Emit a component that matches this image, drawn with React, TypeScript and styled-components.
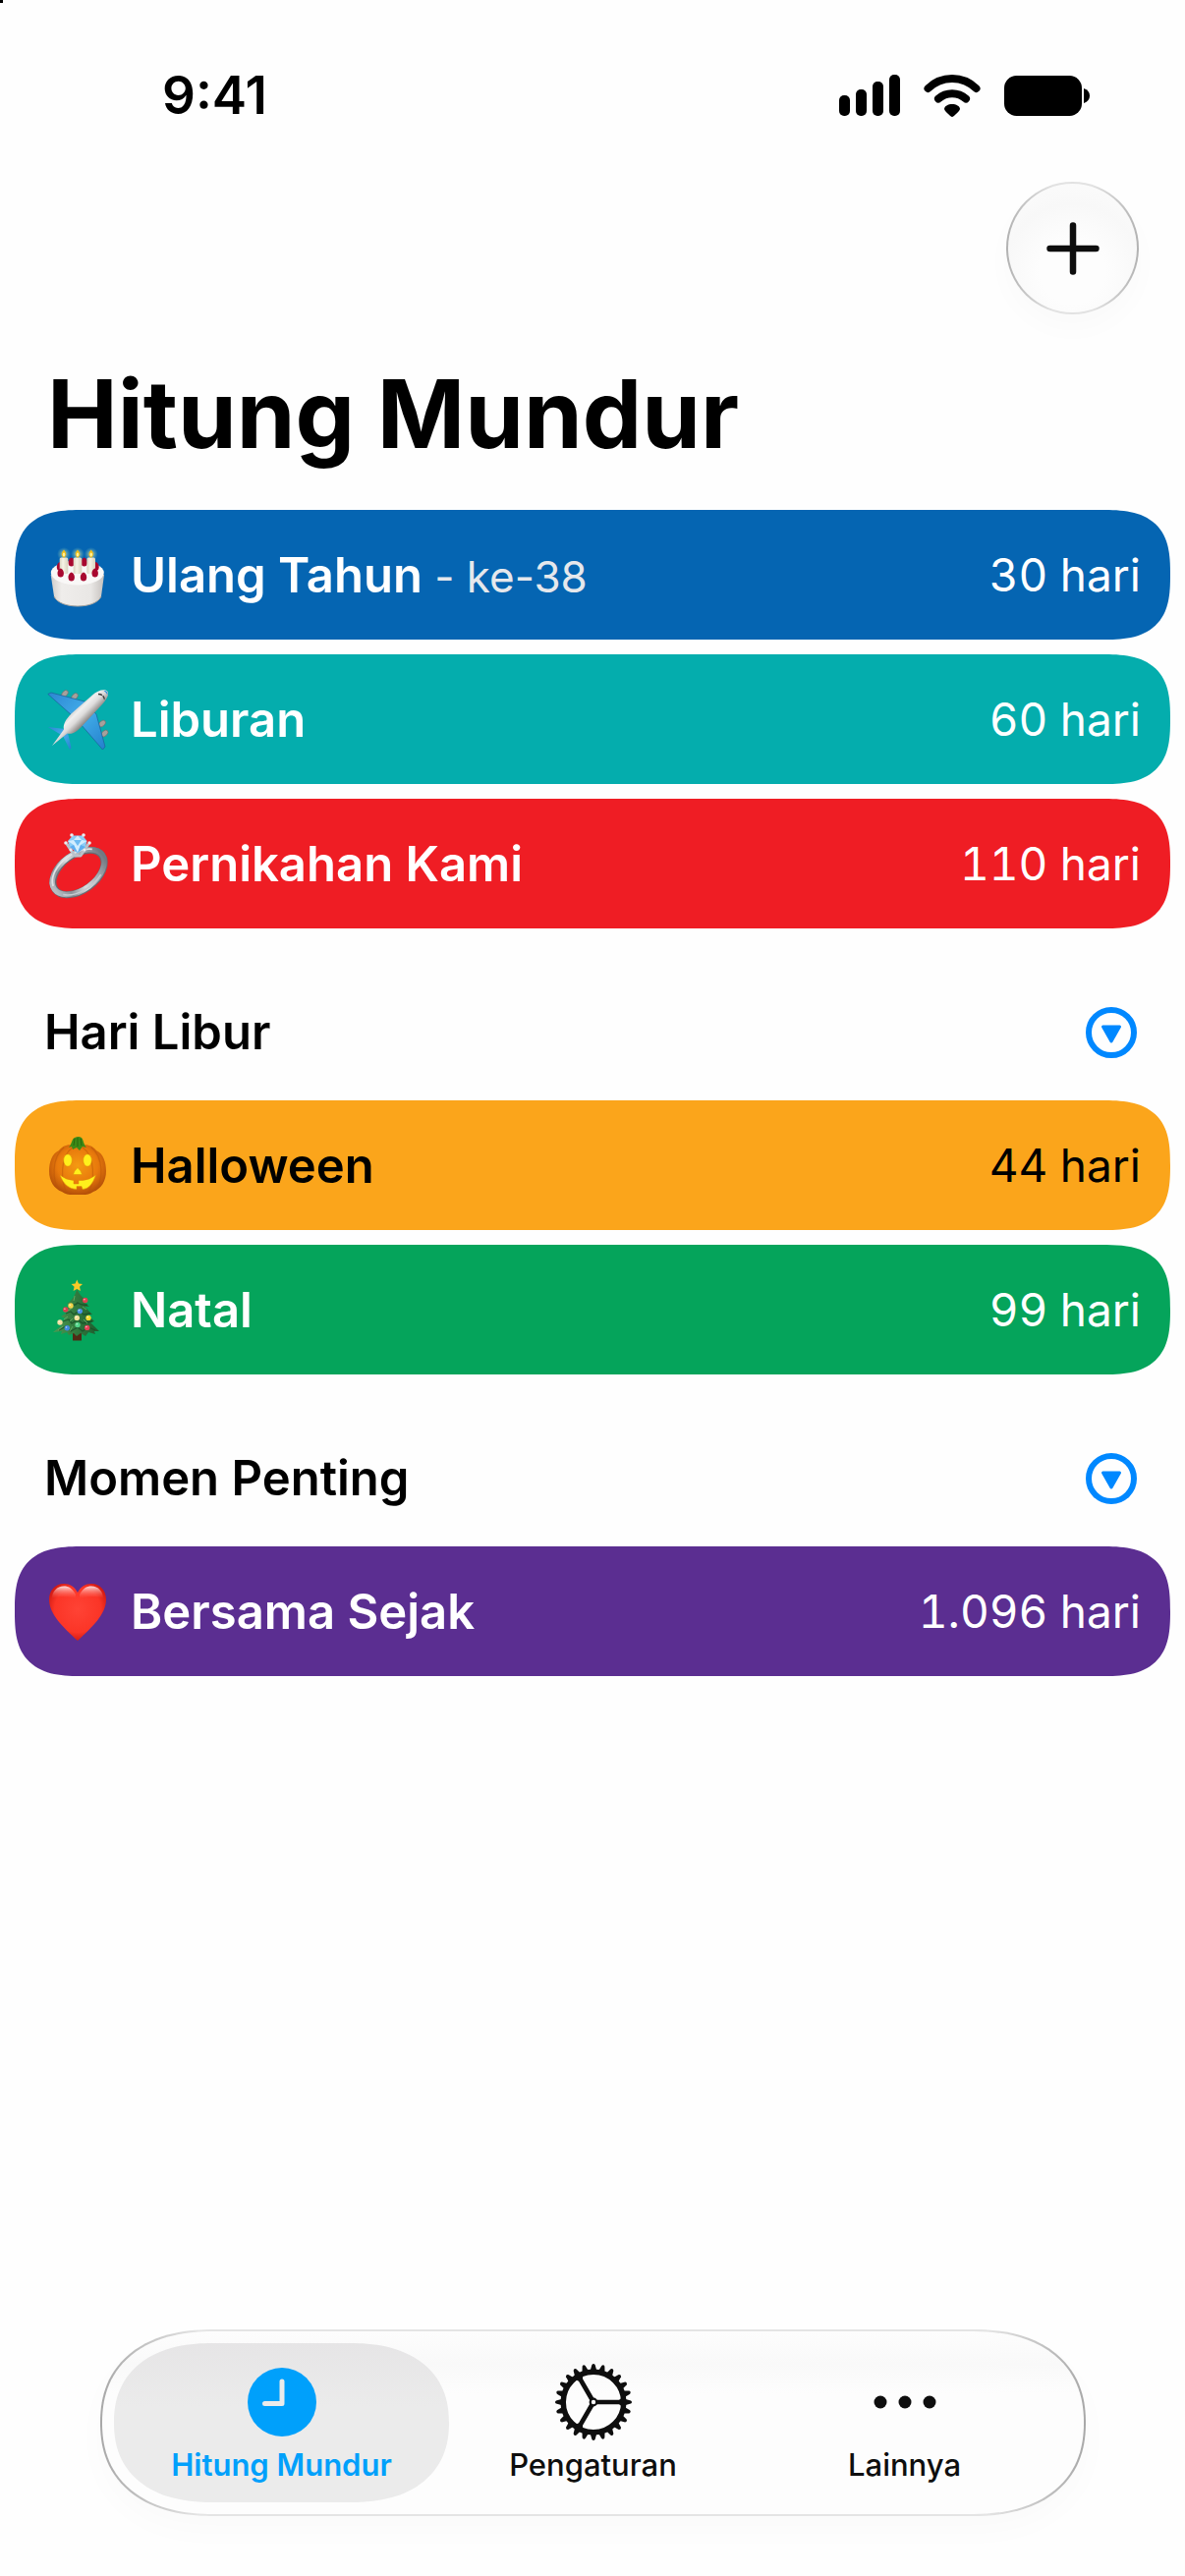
import React, { useState } from 'react';
import styled, { createGlobalStyle } from 'styled-components';

const GlobalStyle = createGlobalStyle`
  * { box-sizing: border-box; }
  body {
    margin: 0;
    background: #fefefe;
    color: #000;
    font-family: Inter, "Liberation Sans", sans-serif;
    -webkit-font-smoothing: antialiased;
  }
  h1, h2, ul { margin: 0; padding: 0; }
  ul { list-style: none; }
  button { font-family: inherit; border: 0; padding: 0; background: none; cursor: pointer; }
  svg { display: block; flex: none; overflow: visible; }
`;

const Screen = styled.div`
  display: flex;
  flex-direction: column;
  min-height: 100vh;
  background: linear-gradient(#000, #000) 0 0 / 3px 3px no-repeat #fefefe;
`;

const StatusBar = styled.header`
  display: flex;
  align-items: center;
  justify-content: space-between;
  padding: 62px 97px 0 165px;
`;

const Clock = styled.time`
  font-size: 53px;
  line-height: 70px;
  font-weight: 600;
`;

const StatusIcons = styled.div`
  display: flex;
  align-items: center;
  gap: 24px;
`;

const Toolbar = styled.div`
  display: flex;
  justify-content: flex-end;
  padding: 53px 47px 0;
`;

const AddButton = styled.button`
  display: grid;
  place-items: center;
  width: 135px;
  height: 135px;
  border-radius: 50%;
  border: 2px solid transparent;
  background:
    radial-gradient(circle at 50% 68%, #fdfdfd 30%, #f8f8f8 62%, #fdfdfd 100%) padding-box,
    linear-gradient(90deg, #b2b2b2, #e2e2e2 35%, #e2e2e2 65%, #b2b2b2) border-box;
  box-shadow: 0 14px 30px rgba(0, 0, 0, 0.02);
`;

const Title = styled.h1`
  padding: 41px 48px 38px;
  font-size: 96px;
  line-height: 120px;
  font-weight: 700;
`;

const SectionHeader = styled.div`
  display: flex;
  align-items: center;
  justify-content: space-between;
  padding: 76px 49px 39px 45px;
`;

const SectionTitle = styled.h2`
  font-size: 49px;
  line-height: 60px;
  font-weight: 600;
`;

const CollapseButton = styled.button`
  color: #0088ff;
`;

const List = styled.ul`
  display: flex;
  flex-direction: column;
  gap: 15px;
  padding: 0 15px;
`;

const Row = styled.li<{ $color: string; $dark?: boolean }>`
  display: flex;
  align-items: center;
  gap: 22px;
  height: 132px;
  padding: 0 30px 0 32px;
  border-radius: 54px;
  background: ${(p) => p.$color};
  color: ${(p) => (p.$dark ? '#000' : '#fff')};
  @supports (corner-shape: squircle) {
    border-radius: 70px / 66px;
    corner-shape: superellipse(1.5);
  }
`;

const Name = styled.span`
  flex: 1;
  padding-top: 2px;
  font-size: 49px;
  line-height: 60px;
  font-weight: 600;
`;

const Note = styled.span`
  font-size: 44px;
  font-weight: 400;
  color: #e6e8ec;
`;

const Count = styled.span`
  font-size: 46px;
  line-height: 60px;
  font-weight: 400;
  font-variant-numeric: tabular-nums;
`;

const TabBar = styled.nav`
  display: flex;
  margin: auto 101px 61px 102px;
  padding: 12px;
  border-radius: 95px;
  border: 2px solid transparent;
  background:
    linear-gradient(#fdfdfd, #f9f9f9 18%, #fdfdfd 34%, #fdfdfd) padding-box,
    linear-gradient(90deg, #a8a8a8, #e4e4e4 10%, #e4e4e4 90%, #a8a8a8) border-box;
  box-shadow: 0 14px 34px rgba(0, 0, 0, 0.02);
  @supports (corner-shape: squircle) {
    border-radius: 116px / 95px;
    corner-shape: superellipse(1.2);
  }
`;

const Tab = styled.button<{ $active: boolean }>`
  flex: 1;
  display: flex;
  flex-direction: column;
  align-items: center;
  gap: 4px;
  height: 162px;
  padding-top: 20px;
  border-radius: 81px;
  font-size: 31px;
  line-height: 40px;
  font-weight: ${(p) => (p.$active ? 600 : 500)};
  color: ${(p) => (p.$active ? '#00a0fb' : '#0e0e0e')};
  background: ${(p) => (p.$active ? 'linear-gradient(#e6e5e6, #ebebeb 40%)' : 'none')};
  & + & { margin-left: -24px; }
  @supports (corner-shape: squircle) {
    border-radius: 100px / 81px;
    corner-shape: superellipse(1.2);
  }
`;

const SignalIcon = () => (
  <svg width="62" height="42" viewBox="0 0 62 42" aria-hidden="true">
    <rect x="0" y="21" width="11" height="21" rx="5" />
    <rect x="17" y="15" width="11" height="27" rx="5" />
    <rect x="34" y="7" width="11" height="35" rx="5" />
    <rect x="51" y="0" width="11" height="42" rx="5" />
  </svg>
);

const WifiIcon = () => (
  <svg width="58" height="43" viewBox="0 0 58 43" aria-hidden="true">
    <g fill="none" stroke="#000" strokeWidth="8" strokeLinecap="round">
      <path d="M4.500 14 A35 35 0 0 1 53.500 14" />
      <path d="M15 24.500 A21 21 0 0 1 43 24.500" />
    </g>
    <path d="M29 43 C27.500 43 21 36.500 21 35 C21 32 25 30 29 30 C33 30 37 32 37 35 C37 36.500 30.500 43 29 43Z" />
  </svg>
);

const BatteryIcon = () => (
  <svg width="87" height="41" viewBox="0 0 87 41" aria-hidden="true">
    <rect width="79" height="41" rx="12.500" />
    <path d="M81 13 C85 14.500 87 17 87 20.500 C87 24 85 26.500 81 28Z" />
  </svg>
);

const PlusIcon = () => (
  <svg width="54" height="54" viewBox="0 0 54 54" aria-hidden="true">
    <path d="M27 3.500 V50.500 M3.500 27 H50.500" stroke="#0e0e0e" strokeWidth="6.500" strokeLinecap="round" />
  </svg>
);

const CollapseIcon = () => (
  <svg width="52" height="52" viewBox="0 0 52 52" aria-hidden="true">
    <circle cx="26" cy="26" r="23" fill="none" stroke="currentColor" strokeWidth="6" />
    <path d="M17.500 20 H34.500 L26 35Z" fill="currentColor" stroke="currentColor" strokeWidth="3" strokeLinejoin="round" />
  </svg>
);

const ClockIcon = () => (
  <svg width="80" height="80" viewBox="0 0 80 80" aria-hidden="true">
    <circle cx="40" cy="40" r="35" fill="currentColor" />
    <path d="M40 19 V41.500 H22.500" fill="none" stroke="#ebebeb" strokeWidth="5" strokeLinecap="round" strokeLinejoin="round" />
  </svg>
);

const GearIcon = () => (
  <svg width="80" height="80" viewBox="0 0 80 80" aria-hidden="true">
    <g transform="translate(40 40)" fill="currentColor">
      {Array.from({ length: 24 }, (_, i) => (
        <path key={i} transform={`rotate(${i * 15})`} d="M-3.600 -31 L-1.600 -38 Q0 -40 1.600 -38 L3.600 -31Z" />
      ))}
      <circle r="30.800" fill="none" stroke="currentColor" strokeWidth="5.500" />
      {[0, 120, 240].map((a) => (
        <path key={a} transform={`rotate(${a})`} d="M2 -2.300 H26 L30 -5 V5 L26 2.300 H2Z" />
      ))}
      <circle r="3.300" fill="#fdfdfd" stroke="currentColor" strokeWidth="2.200" />
    </g>
  </svg>
);

const MoreIcon = () => (
  <svg width="80" height="80" viewBox="0 0 80 80" fill="currentColor" aria-hidden="true">
    <circle cx="15" cy="40" r="6.500" />
    <circle cx="40" cy="40" r="6.500" />
    <circle cx="65" cy="40" r="6.500" />
  </svg>
);

const Emoji = ({ label, children }: { label: string; children: React.ReactNode }) => (
  <svg width="64" height="64" viewBox="0 0 64 64" role="img" aria-label={label}>{children}</svg>
);

const berries = (points: number[][]) =>
  points.map(([x, y]) => (
    <path key={`${x}-${y}`} d={`M${x} ${y - 5} C${x + 3} ${y - 4} ${x + 4} ${y} ${x + 2.5} ${y + 3} Q${x} ${y + 5} ${x - 2.5} ${y + 3} C${x - 4} ${y} ${x - 3} ${y - 4} ${x} ${y - 5}Z`} fill="#a8082f" />
  ));

const Cake = () => (
  <Emoji label="Kue">
    <defs>
      <linearGradient id="cakeSide" x1="0" x2="1">
        <stop offset="0" stopColor="#cfccc9" />
        <stop offset=".2" stopColor="#efedeb" />
        <stop offset=".75" stopColor="#e9e7e5" />
        <stop offset="1" stopColor="#c4c0bd" />
      </linearGradient>
      <linearGradient id="candle" x1="0" x2="1">
        <stop offset="0" stopColor="#d9d4c0" />
        <stop offset=".4" stopColor="#f6f3e6" />
        <stop offset="1" stopColor="#d8d2bd" />
      </linearGradient>
      <radialGradient id="glow">
        <stop offset=".2" stopColor="#fff29a" stopOpacity=".6" />
        <stop offset="1" stopColor="#7fd0c0" stopOpacity="0" />
      </radialGradient>
    </defs>
    <path d="M4.700 32 L8 54 C11 61 22 64 32 64 C42 64 53 61 56 54 L59 32Z" fill="url(#cakeSide)" />
    <path d="M8 54 C11 61 22 64 32 64 C42 64 53 61 56 54" fill="none" stroke="#aaa49d" strokeWidth="1" />
    <ellipse cx="31.800" cy="30" rx="27" ry="12.500" fill="#f9f8f7" />
    {berries([[25.7, 19.5], [38.7, 19.5], [14, 24], [50.5, 24]])}
    {[18, 32, 45.7].map((x) => (
      <g key={x}>
        <circle cx={x} cy="11" r="7" fill="url(#glow)" />
        <rect x={x - 4.3} y="14.500" width="8.600" height="16.500" rx="1.500" fill="url(#candle)" />
        <path d={`M${x} 6.500 Q${x + 4.5} 11.500 ${x} 15 Q${x - 4.5} 11.500 ${x} 6.500Z`} fill="#f3bd16" />
        <ellipse cx={x} cy="11.500" rx="1.200" ry="2" fill="#fff3a0" />
      </g>
    ))}
    {berries([[14.7, 30.5], [25.7, 34.5], [38, 34.5], [49.7, 30.5]])}
  </Emoji>
);

const Plane = () => (
  <Emoji label="Pesawat">
    <defs>
      <linearGradient id="wing" x1="0" y1="0" x2="1" y2="1">
        <stop offset="0" stopColor="#2c86d2" />
        <stop offset=".5" stopColor="#43aeea" />
        <stop offset="1" stopColor="#2380cc" />
      </linearGradient>
      <linearGradient id="body" gradientUnits="userSpaceOnUse" x1="27" y1="18" x2="42" y2="33">
        <stop offset="0" stopColor="#b5b2b1" />
        <stop offset=".4" stopColor="#f0efef" />
        <stop offset=".65" stopColor="#dedcdc" />
        <stop offset="1" stopColor="#8d8987" />
      </linearGradient>
    </defs>
    <g fill="#a7a09c" stroke="#6f6b69" strokeWidth=".6">
      <ellipse cx="19" cy="6" rx="4" ry="2.600" transform="rotate(-48 19 6)" />
      <ellipse cx="29" cy="9" rx="4" ry="2.600" transform="rotate(-48 29 9)" />
      <ellipse cx="57" cy="36.500" rx="4" ry="2.600" transform="rotate(-42 57 36.500)" />
      <ellipse cx="59.500" cy="46.500" rx="4" ry="2.600" transform="rotate(-42 59.500 46.500)" />
    </g>
    <path d="M1.800 6.500 L5 5 L39 14 L51 27 L60 60 L57.500 63 L35 37 L26 28Z" fill="url(#wing)" stroke="#1b6098" strokeWidth=".7" />
    <path d="M2 40 L19 42 L22 46 L25.500 61 L24 63 L17 49 L12 46Z" fill="url(#wing)" />
    <path d="M62.300 3.500 C59 .8 52 3 47 7.500 L26 26 C19 33 17 38 18 42.500 L6 59 L21.500 46.500 C27 48 32 44 37 38.500 L57 17 C62 11.500 64.500 6.500 62.300 3.500Z" fill="url(#body)" />
    <path d="M53 6.500 Q59 6.500 59.500 13" fill="none" stroke="#3e3d3d" strokeWidth="1.400" strokeDasharray="4 1" />
    <path d="M58.500 3 Q63 2.500 62.500 7.500 Q61 4.500 58.500 3Z" fill="#3097dd" />
  </Emoji>
);

const Ring = () => (
  <Emoji label="Cincin">
    <defs>
      <linearGradient id="band" x1="0" y1="0" x2="1" y2="0">
        <stop offset="0" stopColor="#b6bcc2" />
        <stop offset=".2" stopColor="#8b9299" />
        <stop offset=".45" stopColor="#d8dcdf" />
        <stop offset=".75" stopColor="#a2a9b0" />
        <stop offset="1" stopColor="#727982" />
      </linearGradient>
    </defs>
    <g transform="rotate(-36 33 41)" fill="none">
      <ellipse cx="33" cy="41" rx="29.500" ry="18" stroke="#666d75" strokeWidth="7" />
      <ellipse cx="33" cy="40.500" rx="30" ry="18" stroke="url(#band)" strokeWidth="5.500" />
      <path d="M4 37 A29.500 18 0 0 1 58 30" stroke="#dfe3e6" strokeWidth="1.800" />
      <path d="M7 50 A29.500 18 0 0 0 50 56" stroke="#c6cbd0" strokeWidth="1.500" />
    </g>
    <path d="M21 12 L29 24 H35 L43 12" fill="none" stroke="#b9c2ca" strokeWidth="3" strokeLinejoin="round" />
    <path d="M22 9 L27 3.500 H37 L41.500 9 L40 15 L32 21.500 L24 15Z" fill="#8bcdf7" />
    <path d="M22 9 L28 8 L32 3.500 L36 8 L41.500 9 L35 13 L32 21 L28 13Z" fill="#d3eeff" />
    <path d="M28 8 H36 L32 14Z" fill="#6fbcf2" />
    <path d="M24 15 L28 13 L32 21Z M40 15 L35 13 L32 21Z" fill="#5eaef0" />
    <g fill="#e8eef2">
      <circle cx="26" cy="3" r="1.800" /><circle cx="38" cy="3" r="1.800" />
      <circle cx="20" cy="11" r="1.800" /><circle cx="44" cy="11" r="1.800" />
      <circle cx="25" cy="18" r="1.500" /><circle cx="39" cy="18" r="1.500" />
    </g>
  </Emoji>
);

const Pumpkin = () => (
  <Emoji label="Labu">
    <defs>
      <radialGradient id="pumpkin" cx=".5" cy=".42" r=".6">
        <stop offset="0" stopColor="#f59a12" />
        <stop offset=".6" stopColor="#e8790c" />
        <stop offset="1" stopColor="#b04c08" />
      </radialGradient>
    </defs>
    <path d="M32 14 C38 9 47 11 51 17 C58 20 61 29 61 38 C61 48 56 56 48 59 C43 63 37 62 32 62 C27 62 21 63 16 59 C8 56 3 48 3 38 C3 29 6 20 13 17 C17 11 26 9 32 14Z" fill="url(#pumpkin)" />
    <g fill="none" stroke="#b9560a" strokeOpacity=".5" strokeWidth="1.200">
      <path d="M27 14 C14 22 14 50 22 61" /><path d="M37 14 C50 22 50 50 42 61" />
      <path d="M18 14 C5 24 6 50 14 57" /><path d="M46 14 C59 24 58 50 50 57" />
    </g>
    <path d="M23 14 C26 11 26 5 29 4 Q33 2 36 4 C38 6 38 11 41 14 L37 13 L34 17 L31 14 L27 16 L26 13Z" fill="#3c8a16" />
    <path d="M29 5 L28 12 M32 4 V13 M35 5 L36 12" stroke="#235e0c" strokeWidth=".8" />
    <g fill="#fff01c" stroke="#dc8a08" strokeWidth=".5">
      <ellipse cx="22" cy="27" rx="4.300" ry="6.200" /><ellipse cx="42" cy="27" rx="4.300" ry="6.200" />
      <path d="M32 34.500 Q36 38 36.500 41.500 H27.500 Q28 38 32 34.500Z" />
      <path d="M14 42 Q20 47 28 47.500 V51 H33 V47.500 H37 Q44 47 50.500 42 Q46 56 37 56.500 L36 53.500 H31 V56.500 Q19 56 14 42Z" />
    </g>
  </Emoji>
);

const baubles: [number, number, string][] = [
  [39.7, 22.5, '#e0404f'], [25, 28, '#f2d34b'], [19.7, 32, '#d8404c'], [34.3, 33.6, '#4b90e8'],
  [31.3, 40.4, '#f3e29a'], [43, 40.4, '#f2d82e'], [14, 45, '#f2dfa0'], [32, 47.6, '#53d68a'],
  [21.3, 50.8, '#3f8ae0'], [41.7, 50.4, '#e53f55'],
];

const Tree = () => (
  <Emoji label="Pohon Natal">
    <defs>
      <linearGradient id="tree" x1="0" x2="1">
        <stop offset="0" stopColor="#4c9a52" />
        <stop offset=".5" stopColor="#317a3e" />
        <stop offset="1" stopColor="#1d5a2d" />
      </linearGradient>
    </defs>
    <rect x="27" y="54" width="9" height="9.500" fill="#502a14" />
    <path d="M31.300 11 C34 17 37 20 41 22 L38 24 L44 29 L39 29 L47 37 L42 37 L49 44 L45 45 L54 54 L49 54 L50 57 L43 55 L40 59 L35 56 L31 59 L28 56 L23 58 L21 55 L15 57 L16 54 L7 55 L16 48 L13 47 L20 41 L15 39 L23 34 L18 33 L25 27 L21 26 C27 22 29 18 31.300 11Z" fill="url(#tree)" />
    <g fill="none" stroke="#174d27" strokeWidth="1.300" strokeOpacity=".75">
      <path d="M24 26 Q29 29 32 25 Q36 28 42 27" /><path d="M20 36 L25 34 L28 37 L34 33 L38 37 L45 36" />
      <path d="M17 44 L23 42 L26 46 L32 42 L37 46 L47 44" /><path d="M13 53 L20 49 L25 54 L32 50 L37 54 L43 50 L50 53" />
    </g>
    <g fill="none" stroke="#6bb069" strokeWidth="1" strokeOpacity=".8">
      <path d="M29 18 L28 23 M27 30 L22 33 M22 39 L18 42 M27 41 L24 44 M17 49 L12 53 M27 49 L24 54 M37 29 L41 32 M38 42 L42 46" />
    </g>
    {baubles.map(([x, y, fill]) => (
      <g key={`${x}-${y}`}>
        <circle cx={x} cy={y} r="2.700" fill={fill} />
        <circle cx={x - 0.8} cy={y - 0.8} r=".8" fill="#fff" fillOpacity=".7" />
      </g>
    ))}
    <path d="M31.300 1.500 L33 5.500 L37 6 L34 8.800 L35 13 L31.300 11 L27.600 13 L28.600 8.800 L25.600 6 L29.600 5.500Z" fill="#fbc927" />
  </Emoji>
);

const Heart = () => (
  <Emoji label="Hati">
    <defs>
      <radialGradient id="heart" cx=".5" cy=".45" r=".62">
        <stop offset="0" stopColor="#ff4335" />
        <stop offset=".65" stopColor="#fb3527" />
        <stop offset="1" stopColor="#c20f0a" />
      </radialGradient>
      <linearGradient id="heartShine" x1="0" y1="0" x2="0" y2="1">
        <stop offset="0" stopColor="#fff" stopOpacity=".85" />
        <stop offset="1" stopColor="#ff6a5c" stopOpacity="0" />
      </linearGradient>
    </defs>
    <path d="M32 13 C35 7 40 4 46 4 C55 4 61 11 61 20 C61 35 47 48 32 62 C17 48 3 35 3 20 C3 11 9 4 18 4 C24 4 29 7 32 13Z" fill="url(#heart)" />
    <path d="M30 15 C27 9 23 6.500 18 6.500 C11 6.500 6 12 6 19 C14 16 22 17 30 19Z" fill="url(#heartShine)" />
    <path d="M34 15 C37 9 41 6.500 46 6.500 C53 6.500 58 12 58 19 C50 16 42 17 34 19Z" fill="url(#heartShine)" />
  </Emoji>
);

type Item = { name: string; note?: string; days: string; color: string; dark?: boolean; Icon: () => React.ReactElement };
type Group = { title?: string; items: Item[] };

const groups: Group[] = [
  {
    items: [
      { name: 'Ulang Tahun', note: '- ke-38', days: '30', color: '#0565b2', Icon: Cake },
      { name: 'Liburan', days: '60', color: '#04adad', Icon: Plane },
      { name: 'Pernikahan Kami', days: '110', color: '#ef1d24', Icon: Ring },
    ],
  },
  {
    title: 'Hari Libur',
    items: [
      { name: 'Halloween', days: '44', color: '#fba51b', dark: true, Icon: Pumpkin },
      { name: 'Natal', days: '99', color: '#05a45b', Icon: Tree },
    ],
  },
  {
    title: 'Momen Penting',
    items: [{ name: 'Bersama Sejak', days: '1.096', color: '#5b2e91', Icon: Heart }],
  },
];

const tabs = [
  { label: 'Hitung Mundur', Icon: ClockIcon },
  { label: 'Pengaturan', Icon: GearIcon },
  { label: 'Lainnya', Icon: MoreIcon },
];

function CountdownGroup({ title, items }: Group) {
  const [open, setOpen] = useState(true);
  return (
    <section>
      {title && (
        <SectionHeader>
          <SectionTitle>{title}</SectionTitle>
          <CollapseButton type="button" aria-label={title} aria-expanded={open} onClick={() => setOpen(!open)}>
            <CollapseIcon />
          </CollapseButton>
        </SectionHeader>
      )}
      {open && (
        <List>
          {items.map(({ name, note, days, color, dark, Icon }) => (
            <Row key={name} $color={color} $dark={dark}>
              <Icon />
              <Name>
                {name}
                {note && <Note> {note}</Note>}
              </Name>
              <Count>{days} hari</Count>
            </Row>
          ))}
        </List>
      )}
    </section>
  );
}

export default function App() {
  const [active, setActive] = useState(0);
  return (
    <Screen>
      <GlobalStyle />
      <StatusBar>
        <Clock>9:41</Clock>
        <StatusIcons>
          <SignalIcon />
          <WifiIcon />
          <BatteryIcon />
        </StatusIcons>
      </StatusBar>
      <Toolbar>
        <AddButton type="button" aria-label="Tambah"><PlusIcon /></AddButton>
      </Toolbar>
      <main>
        <Title>Hitung Mundur</Title>
        {groups.map((group, i) => (
          <CountdownGroup key={i} {...group} />
        ))}
      </main>
      <TabBar>
        {tabs.map(({ label, Icon }, i) => (
          <Tab key={label} type="button" $active={i === active} aria-current={i === active ? 'page' : undefined} onClick={() => setActive(i)}>
            <Icon />
            {label}
          </Tab>
        ))}
      </TabBar>
    </Screen>
  );
}
